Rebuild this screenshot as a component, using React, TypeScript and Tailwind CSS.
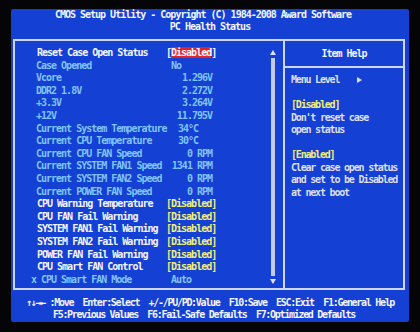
import React from "react";

type Row = {
  label: string;
  value: string;
  kind: "edit" | "info" | "warn" | "locked";
  align?: "left" | "right" | "temp";
  selected?: boolean;
};

const rows: Row[] = [
  { label: "Reset Case Open Status", value: "Disabled", kind: "edit", selected: true },
  { label: "Case Opened", value: "No", kind: "info", align: "left" },
  { label: "Vcore", value: "1.296V", kind: "info", align: "right" },
  { label: "DDR2 1.8V", value: "2.272V", kind: "info", align: "right" },
  { label: "+3.3V", value: "3.264V", kind: "info", align: "right" },
  { label: "+12V", value: "11.795V", kind: "info", align: "right" },
  { label: "Current System Temperature", value: "34°C", kind: "info", align: "temp" },
  { label: "Current CPU Temperature", value: "30°C", kind: "info", align: "temp" },
  { label: "Current CPU FAN Speed", value: "0 RPM", kind: "info", align: "right" },
  { label: "Current SYSTEM FAN1 Speed", value: "1341 RPM", kind: "info", align: "right" },
  { label: "Current SYSTEM FAN2 Speed", value: "0 RPM", kind: "info", align: "right" },
  { label: "Current POWER FAN Speed", value: "0 RPM", kind: "info", align: "right" },
  { label: "CPU Warning Temperature", value: "Disabled", kind: "warn" },
  { label: "CPU FAN Fail Warning", value: "Disabled", kind: "warn" },
  { label: "SYSTEM FAN1 Fail Warning", value: "Disabled", kind: "warn" },
  { label: "SYSTEM FAN2 Fail Warning", value: "Disabled", kind: "warn" },
  { label: "POWER FAN Fail Warning", value: "Disabled", kind: "warn" },
  { label: "CPU Smart FAN Control", value: "Disabled", kind: "warn" },
  { label: "CPU Smart FAN Mode", value: "Auto", kind: "locked", align: "left" },
];

function Value({ row }: { row: Row }) {
  if (row.selected) {
    return (
      <span className="text-[#f4f4ff]">
        [<span className="bg-[#e0242c]">{row.value}</span>]
      </span>
    );
  }
  if (row.kind === "warn") {
    return <span className="text-[#f2ee78]">[{row.value}]</span>;
  }
  if (row.align === "right") {
    return <div className="w-[46px] text-right text-[#80c4fc]">{row.value}</div>;
  }
  if (row.align === "temp") {
    return <div className="pl-[12px] text-[#80c4fc]">{row.value}</div>;
  }
  return <div className="pl-[5px] text-[#80c4fc]">{row.value}</div>;
}

export default function App() {
  return (
    <div
      className="w-[420px] h-[332px] bg-[#050507] pt-[9px] pl-[11px] overflow-hidden"
      style={{ fontFamily: '"DejaVu Sans Mono", "Liberation Mono", monospace' }}
    >
      {/* Screen */}
      <div className="w-[398px] h-[313px] bg-[#1440d4] text-[10px] font-bold tracking-[-1px] rounded-[2px]">
        {/* Title */}
        <div className="text-center leading-[12px] text-[#f2f4ff]">
          <div className="pr-[14px]">CMOS Setup Utility - Copyright (C) 1984-2008 Award Software</div>
          <div>PC Health Status</div>
        </div>

        {/* Main frame */}
        <div className="mt-[6px] ml-[2px] w-[392px] h-[251px] border-2 border-[#cfd6f2] flex">
          {/* Left panel */}
          <div className="w-[270px] border-r-2 border-[#cfd6f2] flex">
            <div className="w-[253px] pt-[6px] pl-[21px] leading-[12.6px]">
              {rows.map((row) => (
                <div key={row.label} className="flex whitespace-nowrap">
                  <div
                    className={
                      "w-[130px] relative " +
                      (row.kind === "edit" || row.kind === "warn"
                        ? "text-[#f4f4ff] pl-[1px]"
                        : "text-[#80c4fc]")
                    }
                  >
                    {row.kind === "locked" && (
                      <span className="absolute left-[-5px] text-[#80c4fc]">x</span>
                    )}
                    <span className={row.kind === "locked" ? "pl-[5px]" : ""}>{row.label}</span>
                  </div>
                  <Value row={row} />
                </div>
              ))}
            </div>
            {/* Scrollbar */}
            <div className="w-[10px] flex flex-col items-center pt-[9px] pb-[4px]">
              <div className="w-0 h-0 border-x-[3px] border-x-transparent border-b-[5px] border-b-[#dde2f4]" />
              <div className="flex-1 w-[4px] mt-[3px] bg-[#c4cbe4]" />
              <div className="w-0 h-0 mt-[3px] border-x-[3px] border-x-transparent border-t-[5px] border-t-[#dde2f4]" />
            </div>
          </div>

          {/* Item Help */}
          <div className="flex-1 flex flex-col">
            <div className="h-[27px] border-b-2 border-[#cfd6f2] flex items-center justify-center text-[#f2f4ff]">
              Item Help
            </div>
            <div className="pt-[6px] pl-[6px] leading-[12.5px] tracking-[-1.2px] text-[#dcdff0] whitespace-nowrap">
              <div className="flex items-center">
                Menu Level
                <div className="ml-[18px] w-0 h-0 border-y-[3px] border-y-transparent border-l-[5px] border-l-[#dcdff0]" />
              </div>
              <div className="h-[12.5px]" />
              <div className="text-[#f2ee78]">[Disabled]</div>
              <div>Don't reset case</div>
              <div>open status</div>
              <div className="h-[12.5px]" />
              <div className="text-[#f2ee78]">[Enabled]</div>
              <div>Clear case open status</div>
              <div>and set to be Disabled</div>
              <div>at next boot</div>
            </div>
          </div>
        </div>

        {/* Footer */}
        <div className="pt-[7px] text-center leading-[12px] tracking-[-1.3px] text-[#f2f4ff] whitespace-nowrap">
          <div>
            ↑↓→← :Move&nbsp;&nbsp;Enter:Select&nbsp;&nbsp;+/-/PU/PD:Value&nbsp;&nbsp;F10:Save&nbsp;&nbsp;ESC:Exit&nbsp;&nbsp;F1:General Help
          </div>
          <div className="pr-[12px]">
            F5:Previous Values&nbsp;&nbsp;F6:Fail-Safe Defaults&nbsp;&nbsp;F7:Optimized Defaults
          </div>
        </div>
      </div>
    </div>
  );
}
